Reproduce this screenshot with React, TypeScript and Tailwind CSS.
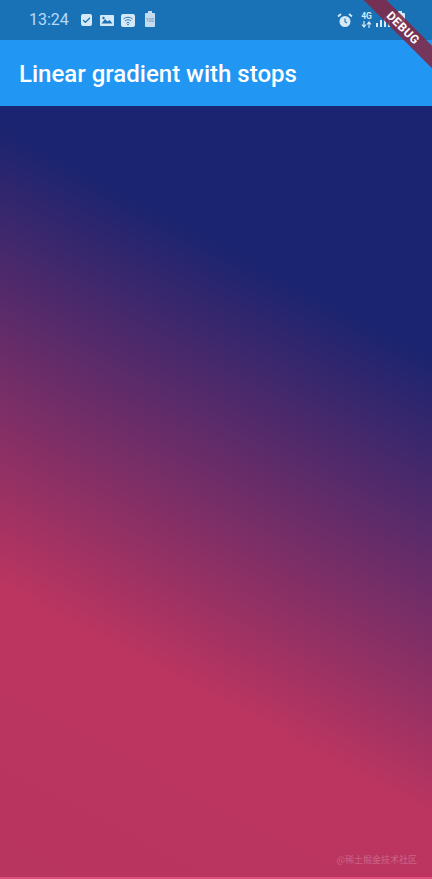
import { Check } from 'lucide-react'

function StatusIcons() {
  return (
    <div className="flex items-center">
      <div className="w-[11px] h-[12px] rounded-[2px] bg-[#d5e8f7] flex items-center justify-center mr-[8px]">
        <Check size={9} strokeWidth={3.5} className="text-[#1a72b6]" />
      </div>
      <svg width="14" height="11" viewBox="0 0 14 11" className="mr-[7px]">
        <rect width="14" height="11" rx="1" fill="#d5e8f7" />
        <path d="M1.5 8.5 5 4l2.5 2.5L9.5 5l3 3.5z" fill="#1a72b6" />
        <circle cx="3.5" cy="3" r="1.2" fill="#1a72b6" />
      </svg>
      <svg width="14" height="13" viewBox="0 0 14 13" className="mr-[10px]">
        <rect width="14" height="13" rx="2" fill="#d5e8f7" />
        <path d="M2.5 5a6.5 6.5 0 0 1 9 0M4 7a4.2 4.2 0 0 1 6 0M5.6 9a2 2 0 0 1 2.8 0" stroke="#1a72b6" strokeWidth="0.9" fill="none" />
        <circle cx="7" cy="10.5" r="0.8" fill="#1a72b6" />
      </svg>
      <div className="relative w-[10px] h-[14px] rounded-[1px] bg-[#c4dcf0] flex items-center justify-center">
        <div className="absolute top-[-2px] left-[3px] w-[4px] h-[2px] bg-[#c4dcf0]" />
        <span className="text-[5px] leading-none text-[#5c8fb8] font-['Roboto',sans-serif]">100</span>
      </div>
    </div>
  )
}

function RightIcons() {
  return (
    <div className="ml-auto flex items-center">
      <svg width="16" height="15" viewBox="0 0 16 15" className="mr-[7px]">
        <circle cx="8" cy="8.5" r="5.5" fill="#d5e8f7" />
        <path d="M8 5.5v3.2l2 1.3" stroke="#1a72b6" strokeWidth="1.1" fill="none" />
        <path d="M1 3.5 4 1M15 3.5 12 1" stroke="#d5e8f7" strokeWidth="1.8" fill="none" />
      </svg>
      <div className="flex flex-col items-center w-[13px] mr-[3px] font-['Roboto',sans-serif] text-[#d5e8f7] font-bold">
        <span className="text-[8.5px] leading-[8px]">4G</span>
        <svg width="11" height="7" viewBox="0 0 11 7" className="mt-[1px]">
          <path d="M3 0v5M1 3.5 3 6l2-2.5M8 7V2M6 3.5 8 1l2 2.5" stroke="#d5e8f7" strokeWidth="1.2" fill="none" />
        </svg>
      </div>
      <svg width="15" height="14" viewBox="0 0 15 14" className="mr-[4px]" fill="#d5e8f7">
        <rect x="0" y="10" width="2" height="4" />
        <rect x="4" y="7" width="2" height="7" />
        <rect x="8" y="4" width="2" height="10" />
        <rect x="12" y="0" width="2" height="14" />
      </svg>
      <div className="relative w-[10px] h-[14px] rounded-[1px] bg-[#d5e8f7]">
        <div className="absolute top-[-2px] left-[3px] w-[4px] h-[2px] bg-[#d5e8f7]" />
      </div>
    </div>
  )
}

function StatusBar() {
  return (
    <div className="h-[40px] bg-[#1a72b6] flex items-center pl-[29px] pr-[27px]">
      <span className="text-[16px] leading-none font-['Roboto',sans-serif] mr-[12px] text-[#b5dafa]">13:24</span>
      <StatusIcons />
      <RightIcons />
    </div>
  )
}

export default function App() {
  return (
    <div className="relative w-[432px] h-[879px] overflow-hidden flex flex-col font-['Roboto',sans-serif]">
      <StatusBar />
      <div className="h-[66px] bg-[#2196f3] flex items-center px-[19px] pt-[2px]">
        <h1 className="text-[24px] font-medium text-white">Linear gradient with stops</h1>
      </div>
      <div className="flex-1 bg-[linear-gradient(208deg,#1b2470_25%,#bc3560_71%,#b8355f_100%)]" />
      <div className="h-[2px] bg-[#e0507f]" />
      <span className="absolute right-[15px] bottom-[15px] text-[9px] leading-none text-white/25 font-['Noto_Sans_CJK_SC',sans-serif]">@稀土掘金技术社区</span>
      <div className="absolute top-[20px] right-[-36px] w-[130px] h-[16px] bg-[#7f2a49]/90 rotate-45 flex items-center justify-center">
        <span className="text-[12px] font-bold tracking-[0.5px] text-white font-['Roboto',sans-serif]">DEBUG</span>
      </div>
    </div>
  )
}
